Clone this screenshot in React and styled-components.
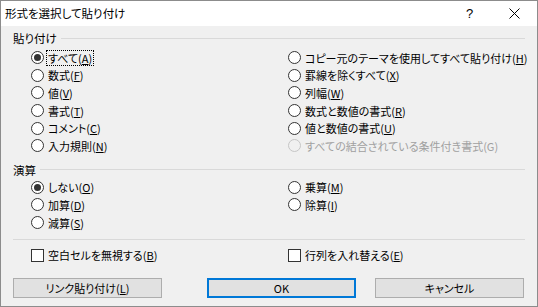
import React from 'react';
import styled, { createGlobalStyle } from 'styled-components';

const GlobalStyle = createGlobalStyle`
  html, body {
    margin: 0;
    padding: 0;
    background: #ffffff;
  }
  body {
    font-family: 'Noto Sans CJK JP', 'Noto Sans', sans-serif;
    font-size: 11px;
    color: #000;
    font-feature-settings: 'palt';
  }
`;

const Window = styled.div`
  width: 538px;
  height: 307px;
  box-sizing: border-box;
  border: 1px solid #8c8c8c;
  background: #f0f0f0;
  display: flex;
  flex-direction: column;
  overflow: hidden;
`;

const TitleBar = styled.div`
  height: 25px;
  background: #ffffff;
  display: flex;
  align-items: center;
  padding-left: 4px;
  flex-shrink: 0;

  .__title {
    flex: 1;
    font-size: 11.5px;
    line-height: 25px;
  }
`;

const TitleButton = styled.div`
  width: 45px;
  height: 25px;
  display: flex;
  align-items: center;
  justify-content: center;
  font-family: 'Liberation Sans', sans-serif;
  font-size: 13px;
`;

const Body = styled.div`
  padding: 5px 12px 0 12px;
  display: flex;
  flex-direction: column;
`;

const GroupHeader = styled.div`
  height: 14px;
  display: flex;
  align-items: center;
  gap: 4px;
  margin-top: ${(p) => p.$top || 0}px;
  line-height: 14px;
  font-size: 11.5px;

  &:after {
    content: '';
    flex: 1;
    height: 1px;
    background: #d9d9d9;
  }
`;

const OptionGrid = styled.div`
  display: grid;
  grid-template-columns: 257px 1fr;
  grid-auto-flow: column;
  grid-template-rows: ${(p) => `repeat(${p.$rows}, 17.6px)`};
  margin-left: 18px;
  margin-top: ${(p) => p.$top || 0}px;
`;

const Option = styled.label`
  display: flex;
  align-items: center;
  gap: 3px;
  height: 17.6px;
  line-height: 14px;
  white-space: nowrap;
  color: ${(p) => (p.$disabled ? '#a0a0a0' : '#000')};
`;

const RadioCircle = styled.span`
  width: 13px;
  height: 13px;
  box-sizing: border-box;
  border-radius: 50%;
  border: 1px solid ${(p) => (p.$disabled ? '#c6c6c6' : '#333333')};
  background: ${(p) => (p.$disabled ? '#f0f0f0' : '#ffffff')};
  display: flex;
  align-items: center;
  justify-content: center;
  flex-shrink: 0;

  &:after {
    content: '';
    display: ${(p) => (p.$checked ? 'block' : 'none')};
    width: 7px;
    height: 7px;
    border-radius: 50%;
    background: #333333;
  }
`;

const CheckBox = styled.span`
  width: 13px;
  height: 13px;
  box-sizing: border-box;
  border: 1px solid #333333;
  background: #ffffff;
  flex-shrink: 0;
`;

const Text = styled.span`
  padding: 0 1px;
  outline: ${(p) => (p.$focus ? '1px dotted #000' : 'none')};
  outline-offset: 0;

  u {
    text-decoration: underline;
    text-underline-offset: 1px;
  }
`;

const Separator = styled.div`
  height: 1px;
  background: #d9d9d9;
  margin-top: 8px;
`;

const ButtonRow = styled.div`
  display: grid;
  grid-template-columns: 149px 45px 149px 19px 149px;
  margin-top: 14px;
`;

const Button = styled.button`
  height: 20px;
  box-sizing: border-box;
  background: #e1e1e1;
  border: ${(p) => (p.$primary ? '2px solid #0078d7' : '1px solid #adadad')};
  font-family: inherit;
  font-size: 11px;
  font-feature-settings: 'palt';
  color: #000;
  padding: 0;
  line-height: 16px;
  grid-column: ${(p) => p.$col};

  u {
    text-underline-offset: 1px;
  }
`;

function Label({ text, k, focus }) {
  return (
    <Text $focus={focus}>
      {text}
      {k && (
        <>
          (<u>{k}</u>)
        </>
      )}
    </Text>
  );
}

const pasteOptions = [
  { text: 'すべて', k: 'A', checked: true, focus: true },
  { text: '数式', k: 'F' },
  { text: '値', k: 'V' },
  { text: '書式', k: 'T' },
  { text: 'コメント', k: 'C' },
  { text: '入力規則', k: 'N' },
  { text: 'コピー元のテーマを使用してすべて貼り付け', k: 'H' },
  { text: '罫線を除くすべて', k: 'X' },
  { text: '列幅', k: 'W' },
  { text: '数式と数値の書式', k: 'R' },
  { text: '値と数値の書式', k: 'U' },
  { text: 'すべての結合されている条件付き書式(G)', disabled: true },
];

const opOptions = [
  { text: 'しない', k: 'O', checked: true },
  { text: '加算', k: 'D' },
  { text: '減算', k: 'S' },
  { text: '乗算', k: 'M' },
  { text: '除算', k: 'I' },
];

function RadioList({ items, rows, top }) {
  return (
    <OptionGrid $rows={rows} $top={top}>
      {items.map((o, i) => (
        <Option key={i} $disabled={o.disabled}>
          <RadioCircle $checked={o.checked} $disabled={o.disabled} />
          <Label text={o.text} k={o.k} focus={o.focus} />
        </Option>
      ))}
    </OptionGrid>
  );
}

export default function App() {
  return (
    <>
      <GlobalStyle />
      <Window>
        <TitleBar>
          <span className="__title">形式を選択して貼り付け</span>
          <TitleButton>?</TitleButton>
          <TitleButton>
            <svg width="11" height="11" viewBox="0 0 11 11">
              <path d="M0.5 0.5 L10.5 10.5 M10.5 0.5 L0.5 10.5" stroke="#000" strokeWidth="1" fill="none" />
            </svg>
          </TitleButton>
        </TitleBar>
        <Body>
          <GroupHeader>貼り付け</GroupHeader>
          <RadioList items={pasteOptions} rows={6} top={4} />
          <GroupHeader $top={8}>演算</GroupHeader>
          <RadioList items={opOptions} rows={3} top={2} />
          <Separator />
          <OptionGrid $rows={1} $top={6}>
            <Option>
              <CheckBox />
              <Label text="空白セルを無視する" k="B" />
            </Option>
            <Option>
              <CheckBox />
              <Label text="行列を入れ替える" k="E" />
            </Option>
          </OptionGrid>
          <ButtonRow>
            <Button $col="1">
              リンク貼り付け(<u>L</u>)
            </Button>
            <Button $col="3" $primary>
              OK
            </Button>
            <Button $col="5">キャンセル</Button>
          </ButtonRow>
        </Body>
      </Window>
    </>
  );
}
